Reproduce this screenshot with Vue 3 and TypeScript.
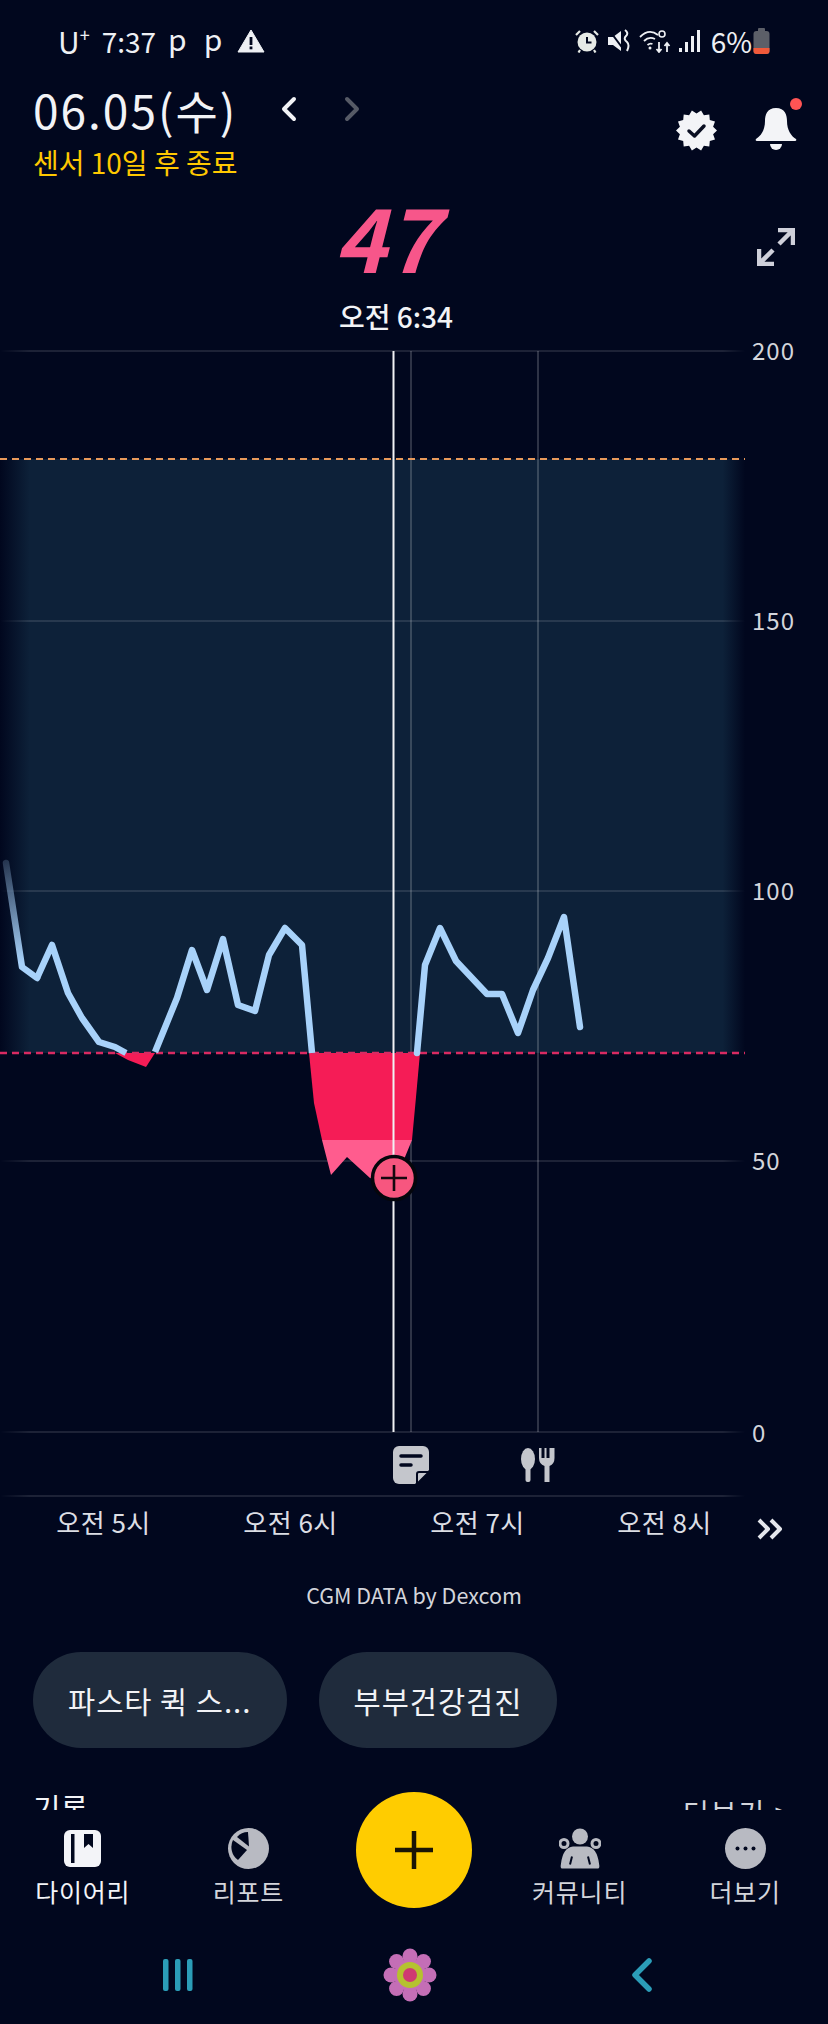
<script setup lang="ts">
// every chart coordinate below is in page pixels, the svg viewBox starts at y=331
const linePoints: [number, number][] = [
  [6, 863], [22, 967], [37, 978], [52, 945], [68, 993], [82, 1018], [99, 1042], [115, 1047],
  [126, 1053], [146, 1054], [155, 1052], [177, 998], [192, 950], [207, 990], [223, 939],
  [238, 1005], [255, 1011], [269, 955], [285, 928], [302, 945], [312, 1053],
]
const linePoints2: [number, number][] = [
  [417, 1053], [425, 965], [440, 928], [456, 961], [487, 994], [502, 994], [518, 1033],
  [533, 990], [548, 958], [564, 917], [580, 1027],
]
const toPath = (pts: [number, number][]) => pts.map((p) => p.join(',')).join(' ')

const lowBig = '309,1053 314,1103 322,1140 412,1140 416,1097 420,1053'
const lowTip = '322,1140 331,1175 347,1157 370,1178 394,1185 405,1157 412,1140'
const lowSmall = '115,1053 128,1060 146,1067 155,1053'

const gridLines = [351, 621, 891, 1161, 1432, 1496]
const yLabels = [
  { y: 351, t: '200' },
  { y: 621, t: '150' },
  { y: 891, t: '100' },
  { y: 1161, t: '50' },
  { y: 1433, t: '0' },
]
const hours = ['오전 5시', '오전 6시', '오전 7시', '오전 8시']
const chips = ['파스타 퀵 스...', '부부건강검진']
const petals = [0, 45, 90, 135, 180, 225, 270, 315]
const badgePts = Array.from({ length: 28 }, (_, i) => {
  const r = i % 2 ? 17 : 20.5
  const a = (i / 28) * Math.PI * 2
  return `${(20.5 + r * Math.cos(a)).toFixed(1)},${(20.5 + r * Math.sin(a)).toFixed(1)}`
}).join(' ')
</script>

<template>
  <div class="page">
    <div class="main">
      <div class="status">
        <div class="status-left">
          <span class="carrier">U<sup>+</sup></span>
          <span>7:37</span>
          <span class="p first">p</span>
          <span class="p">p</span>
          <svg class="warn" width="28" height="24" viewBox="0 0 28 24">
            <path d="M14 1 L27 23 H1 Z" fill="#eef0f4" stroke="#eef0f4" stroke-linejoin="round" />
            <rect x="12.6" y="8" width="2.8" height="8" fill="#01071e" />
            <rect x="12.6" y="17.5" width="2.8" height="2.8" fill="#01071e" />
          </svg>
        </div>
        <div class="status-right">
          <svg width="24" height="24" viewBox="0 0 24 24">
            <circle cx="12" cy="13" r="9.5" fill="#e6eae6" />
            <path d="M12 8 V13.5 H16.5" fill="none" stroke="#01071e" stroke-width="2" />
            <path d="M1 6 L5 2 M23 6 L19 2 M5 21 L3.5 23.5 M19 21 L20.5 23.5" stroke="#e6eae6" stroke-width="2.2" />
          </svg>
          <svg class="mute" width="24" height="24" viewBox="0 0 24 24">
            <path d="M1 8 H6 L14 2 V22 L6 16 H1 Z" fill="#eef0f4" />
            <path d="M2 1 L17 21" stroke="#01071e" stroke-width="2" />
            <path d="M18 1 q4 3 1 6 q-3 3 1 6 q3 3 0 9" fill="none" stroke="#eef0f4" stroke-width="2" />
          </svg>
          <svg class="wifi" width="32" height="24" viewBox="0 0 32 24">
            <path d="M1 8 Q10 -1 19 6 M5 12 Q10 7 16 10 M8.500 16 Q11 14 13.500 15" fill="none" stroke="#eef0f4" stroke-width="1.8" />
            <circle cx="11" cy="19" r="1.500" fill="#eef0f4" />
            <circle cx="23" cy="5" r="3" fill="none" stroke="#eef0f4" stroke-width="1.600" />
            <path d="M20 13 V23 M17.500 20 L20 23 L22.500 20 M28 23 V14 M25.500 17 L28 14 L30.500 17" fill="none" stroke="#eef0f4" stroke-width="1.800" />
          </svg>
          <svg class="signal" width="22" height="24" viewBox="0 0 22 24">
            <rect x="0" y="19" width="3" height="4" fill="#eef0f4" />
            <rect x="6" y="13" width="3" height="10" fill="#eef0f4" />
            <rect x="12" y="7" width="3" height="16" fill="#eef0f4" />
            <rect x="18" y="1" width="3" height="22" fill="#eef0f4" />
          </svg>
          <span class="pct">6%</span>
          <svg width="17" height="26" viewBox="0 0 17 26">
            <rect x="5" y="0" width="7" height="4" rx="1" fill="#5c5f68" />
            <rect x="0.500" y="3" width="16" height="23" rx="3" fill="#5c5f68" />
            <path d="M0.500 20 H16.500 V23 a3 3 0 0 1 -3 3 H3.500 a3 3 0 0 1 -3 -3 Z" fill="#f0593a" />
          </svg>
        </div>
      </div>

      <div class="head">
        <div class="head-left">
          <div class="date-row">
            <span class="date">06.05(수)</span>
            <svg class="chev" width="20" height="28" viewBox="0 0 20 28">
              <path d="M15 4 L5 14 L15 24" fill="none" stroke="#f2f3f6" stroke-width="4" stroke-linecap="round" stroke-linejoin="round" />
            </svg>
            <svg class="chev next" width="20" height="28" viewBox="0 0 20 28">
              <path d="M5 4 L15 14 L5 24" fill="none" stroke="#565a66" stroke-width="4" stroke-linecap="round" stroke-linejoin="round" />
            </svg>
          </div>
          <div class="sensor">센서 10일 후 종료</div>
        </div>
        <div class="head-right">
          <svg width="41" height="41" viewBox="0 0 41 41">
            <polygon :points="badgePts" fill="#f3f4f7" />
            <path d="M13 21 L18.500 26 L28 16" fill="none" stroke="#0a0f22" stroke-width="3.500" stroke-linecap="round" stroke-linejoin="round" />
          </svg>
          <div class="bell">
            <svg width="42" height="42" viewBox="0 0 42 42">
              <path d="M21 0 C12 0 10 7 10 13 C10 22 6 28 1 31 Q0 33 2 33 H40 Q42 33 41 31 C36 28 32 22 32 13 C32 7 30 0 21 0 Z" fill="#f3f4f7" />
              <path d="M15 36 H27 A6 6 0 0 1 15 36 Z" fill="#f3f4f7" />
            </svg>
            <span class="bell-dot"></span>
          </div>
        </div>
      </div>

      <div class="reading">
        <div class="value">47</div>
        <div class="value-time">오전 6:34</div>
        <svg class="expand" width="38" height="38" viewBox="0 0 38 38">
          <path d="M36 2 L22 16 M21 2 H36 V17" fill="none" stroke="#cfd0da" stroke-width="4.500" />
          <path d="M2 36 L16 22 M2 21 V36 H17" fill="none" stroke="#cfd0da" stroke-width="4.500" />
        </svg>
      </div>

      <svg class="chart" width="828" height="1166" viewBox="0 331 828 1166">
        <defs>
          <linearGradient id="bandFade" x1="0" x2="745" y1="0" y2="0" gradientUnits="userSpaceOnUse">
            <stop offset="0" stop-color="#0d2139" stop-opacity="0" />
            <stop offset="0.04" stop-color="#0d2139" />
            <stop offset="0.97" stop-color="#0d2139" />
            <stop offset="1" stop-color="#0d2139" stop-opacity="0" />
          </linearGradient>
          <linearGradient id="gridFade" x1="0" x2="745" y1="0" y2="0" gradientUnits="userSpaceOnUse">
            <stop offset="0" stop-color="#fff" stop-opacity="0" />
            <stop offset="0.04" stop-color="#fff" stop-opacity="0.11" />
            <stop offset="0.97" stop-color="#fff" stop-opacity="0.11" />
            <stop offset="1" stop-color="#fff" stop-opacity="0" />
          </linearGradient>
          <linearGradient id="lineFade" x1="0" x2="0" y1="860" y2="975" gradientUnits="userSpaceOnUse">
            <stop offset="0" stop-color="#a8d2fa" stop-opacity="0.2" />
            <stop offset="0.9" stop-color="#a8d2fa" />
          </linearGradient>
        </defs>

        <rect x="0" y="459" width="745" height="594" fill="url(#bandFade)" />
        <line v-for="y in gridLines" :key="y" x1="0" x2="745" :y1="y" :y2="y" stroke="url(#gridFade)" stroke-width="2" />
        <line x1="411" x2="411" y1="351" y2="1432" stroke="#fff" stroke-opacity="0.18" stroke-width="2" />
        <line x1="538" x2="538" y1="351" y2="1432" stroke="#fff" stroke-opacity="0.18" stroke-width="2" />

        <polygon :points="lowBig" fill="#f51c56" />
        <polygon :points="lowTip" fill="#ff5c8e" />
        <polygon :points="lowSmall" fill="#f51c56" />

        <line x1="0" x2="745" y1="459" y2="459" stroke="#e8995a" stroke-width="2" stroke-dasharray="7 5" />
        <line x1="0" x2="745" y1="1053" y2="1053" stroke="#d92a62" stroke-width="2.500" stroke-dasharray="7 5" />

        <polyline :points="toPath(linePoints.slice(0, 3))" fill="none" stroke="url(#lineFade)" stroke-width="6.500" stroke-linejoin="round" stroke-linecap="round" />
        <polyline :points="toPath(linePoints.slice(2, 9))" fill="none" stroke="#a8d2fa" stroke-width="6.500" stroke-linejoin="round" />
        <polyline :points="toPath(linePoints.slice(10))" fill="none" stroke="#a8d2fa" stroke-width="6.500" stroke-linejoin="round" />
        <polyline :points="toPath(linePoints2)" fill="none" stroke="#a8d2fa" stroke-width="6.500" stroke-linejoin="round" stroke-linecap="round" />

        <line x1="393.500" x2="393.500" y1="351" y2="1432" stroke="#f1f2f4" stroke-width="2" />
        <circle cx="394" cy="1178" r="21.500" fill="#f7567f" stroke="#05060c" stroke-width="3.500" />
        <path d="M381 1178 H407 M394 1165 V1191" stroke="#14080f" stroke-width="2.600" />

        <g fill="#c4c6cc">
          <path d="M399 1446 H423 a6 6 0 0 1 6 6 V1470 L415 1484 H399 a6 6 0 0 1 -6 -6 V1452 a6 6 0 0 1 6 -6 Z" />
          <path d="M401 1456 H421 M401 1465 H411" stroke="#01071e" stroke-width="3.500" stroke-linecap="round" />
          <path d="M417 1484 V1474 a2 2 0 0 1 2 -2 H429 Z" stroke="#01071e" stroke-width="2" />
          <ellipse cx="528" cy="1459" rx="7" ry="11" />
          <rect x="525.500" y="1464" width="5" height="18" rx="2" />
          <path d="M539 1448 H541.500 V1458 H544.500 V1448 H546.500 V1458 H549.500 V1448 H554.500 V1458 Q554.500 1464 549.500 1466 V1482 H544.500 V1466 Q539 1464 539 1458 Z" />
        </g>

        <text v-for="l in yLabels" :key="l.t" class="y-label" x="752" :y="l.y + 9">{{ l.t }}</text>
      </svg>

      <div class="hours">
        <span v-for="h in hours" :key="h" class="hour">{{ h }}</span>
        <svg class="more-hours" width="26" height="22" viewBox="0 0 26 22">
          <path d="M2 2 L11 11 L2 20 M14 2 L23 11 L14 20" fill="none" stroke="#e4e6ec" stroke-width="4" stroke-linejoin="round" />
        </svg>
      </div>

      <div class="credit">CGM DATA by Dexcom</div>

      <div class="chips">
        <span v-for="c in chips" :key="c" class="chip">{{ c }}</span>
      </div>

      <div class="section">
        <span class="section-title">기록</span>
        <span class="section-link">더보기 &gt;</span>
      </div>
    </div>

    <nav class="tabs">
      <div class="tab active">
        <svg width="37" height="37" viewBox="0 0 37 37">
          <rect width="37" height="37" rx="6" fill="#f3f4f8" />
          <rect x="7" y="4" width="3.500" height="29" fill="#01071e" />
          <path d="M20 4 H29 V18 L24.500 14 L20 18 Z" fill="#01071e" />
        </svg>
        <span>다이어리</span>
      </div>
      <div class="tab">
        <svg width="41" height="41" viewBox="0 0 41 41">
          <circle cx="20.500" cy="20.500" r="20.500" fill="#b8bac2" />
          <path d="M20 20.500 L8 11 A15 15 0 0 1 19 6 Z" fill="#01071e" transform="translate(1 -2)" />
          <path d="M19 23 L5 13 A16 16 0 0 0 10 33 Z" fill="#01071e" transform="translate(0 -1)" />
        </svg>
        <span>리포트</span>
      </div>
      <div class="tab tab-fab">
        <button class="fab" type="button" aria-label="add">
          <svg width="40" height="40" viewBox="0 0 40 40">
            <path d="M1 20 H39 M20 1 V39" stroke="#1a1505" stroke-width="4.500" />
          </svg>
        </button>
      </div>
      <div class="tab">
        <svg width="42" height="40" viewBox="0 0 42 40">
          <circle cx="21" cy="8" r="8" fill="#b8bac2" />
          <circle cx="5" cy="15" r="4" fill="none" stroke="#b8bac2" stroke-width="3" />
          <circle cx="37" cy="15" r="4" fill="none" stroke="#b8bac2" stroke-width="3" />
          <path d="M3 40 Q1 40 2 35 Q4 19 14 18 H28 Q38 19 40 35 Q41 40 39 40 Z" fill="#b8bac2" />
          <path d="M11 36 L13 28 M31 36 L29 28" stroke="#01071e" stroke-width="2" />
        </svg>
        <span>커뮤니티</span>
      </div>
      <div class="tab">
        <svg width="41" height="41" viewBox="0 0 41 41">
          <circle cx="20.500" cy="20.500" r="20.500" fill="#b8bac2" />
          <circle cx="12.500" cy="20.500" r="2" fill="#01071e" />
          <circle cx="20.500" cy="20.500" r="2" fill="#01071e" />
          <circle cx="28.500" cy="20.500" r="2" fill="#01071e" />
        </svg>
        <span>더보기</span>
      </div>
    </nav>

    <div class="sysnav">
      <svg width="32" height="32" viewBox="0 0 32 32">
        <rect x="1" y="0" width="5.500" height="32" rx="2" fill="#2b9db8" />
        <rect x="13" y="0" width="5.500" height="32" rx="2" fill="#2b9db8" />
        <rect x="25" y="0" width="5.500" height="32" rx="2" fill="#2b9db8" />
      </svg>
      <svg width="54" height="54" viewBox="0 0 54 54">
        <circle v-for="a in petals" :key="a" cx="27" cy="8" r="7.500" fill="#c46eb6" :transform="`rotate(${a} 27 27)`" />
        <circle cx="27" cy="27" r="16" fill="#c46eb6" />
        <circle cx="27" cy="27" r="13" fill="#b5c22f" />
        <circle cx="27" cy="27" r="7" fill="#cf3a72" />
      </svg>
      <svg width="22" height="34" viewBox="0 0 22 34">
        <path d="M18 3 L4 17 L18 31" fill="none" stroke="#2b9db8" stroke-width="5.500" stroke-linecap="round" stroke-linejoin="round" />
      </svg>
    </div>
  </div>
</template>

<style scoped>
.page {
  position: relative;
  width: 828px;
  height: 2024px;
  display: flex;
  flex-direction: column;
  overflow: hidden;
  background: #01071e;
  color: #f2f3f6;
  font-family: "Noto Sans CJK KR", "Noto Sans", sans-serif;
}

.main {
  height: 1810px;
  flex: none;
  overflow: hidden;
}

.status {
  height: 70px;
  padding: 12px 58px 0 58px;
  box-sizing: border-box;
  display: flex;
  align-items: center;
  justify-content: space-between;
  font-size: 28px;
  color: #eef0f4;
}

.status-left {
  display: flex;
  align-items: center;
  gap: 12px;
}

.carrier {
  font-size: 30px;
  line-height: 1;
}

.carrier sup {
  font-size: 18px;
  vertical-align: 12px;
  line-height: 0;
}

.status-left .p {
  margin-left: 5px;
  font-size: 30px;
  margin-top: -6px;
}

.status-left .p.first {
  margin-left: 0;
}

.warn {
  margin-left: 3px;
}

.status-right {
  display: flex;
  align-items: center;
  gap: 8px;
}

.status-right .pct {
  margin-left: 2px;
  font-size: 28px;
  margin-right: -7px;
}

.head {
  height: 110px;
  padding: 10px 31px 0 33px;
  box-sizing: border-box;
  display: flex;
  justify-content: space-between;
}

.date-row {
  display: flex;
  align-items: center;
  height: 58px;
}

.date {
  width: 246px;
  font-size: 46px;
  line-height: 58px;
  letter-spacing: 2px;
}

.chev.next {
  margin-left: 43px;
}

.sensor {
  font-size: 28px;
  line-height: 36px;
  color: #ffc800;
  margin-top: 6px;
}

.head-right {
  display: flex;
  align-items: flex-start;
  gap: 38px;
  padding-top: 30px;
}

.bell {
  position: relative;
  margin-top: -2px;
}

.bell-dot {
  position: absolute;
  top: -10px;
  right: -5px;
  width: 12px;
  height: 12px;
  border-radius: 50%;
  background: #ff5454;
}

.reading {
  position: relative;
  height: 151px;
  text-align: center;
  padding-right: 36px;
  padding-top: 5px;
  box-sizing: border-box;
}

.value {
  font-size: 88px;
  font-weight: 700;
  line-height: 100px;
  padding-right: 20px;
  color: #f7568a;
  font-style: italic;
}

.value-time {
  font-size: 28px;
  line-height: 34px;
  font-weight: 500;
  margin-top: 14px;
}

.expand {
  position: absolute;
  top: 48px;
  right: 33px;
}

.chart {
  display: block;
}

.y-label {
  font-size: 24px;
  fill: #d3d5db;
  letter-spacing: 1px;
}

.hours {
  height: 48px;
  padding-left: 10px;
  display: flex;
  align-items: center;
  font-size: 26px;
  letter-spacing: 0.5px;
  color: #dcdee4;
}

.hour {
  width: 187px;
  text-align: center;
}

.more-hours {
  margin-left: -1px;
  margin-top: 16px;
}

.credit {
  height: 76px;
  line-height: 76px;
  margin-top: 12px;
  text-align: center;
  font-size: 21.500px;
  color: #d3d5db;
}

.chips {
  display: flex;
  gap: 32px;
  padding: 0 33px;
  margin-top: 19px;
}

.chip {
  height: 96px;
  box-sizing: border-box;
  padding: 0 35px;
  border-radius: 48px;
  background: #1f2b3c;
  display: flex;
  align-items: center;
  font-size: 29.500px;
  letter-spacing: 1px;
  color: #f2f3f6;
}

.section {
  display: flex;
  justify-content: space-between;
  padding: 0 36px 0 33px;
  margin-top: 37px;
  font-size: 30px;
}

.section-link {
  color: #d3d5db;
  font-size: 28px;
  letter-spacing: 2px;
  margin-top: 7px;
}

.tabs {
  height: 124px;
  display: grid;
  grid-template-columns: repeat(5, 1fr);
  flex: none;
}

.tab {
  display: flex;
  flex-direction: column;
  align-items: center;
  justify-content: flex-start;
  height: 100px;
  color: #d3d5db;
  font-size: 25px;
  letter-spacing: 0.8px;
}

.tab svg {
  height: 41px;
  margin-top: 18px;
}

.tab span {
  line-height: 30px;
  margin-top: 7px;
}

.tab.active {
  color: #f3f4f8;
}

.tab-fab {
  position: relative;
}

.fab {
  position: absolute;
  top: -18px;
  left: 50%;
  margin-left: -58px;
  width: 116px;
  height: 116px;
  border: none;
  padding: 0;
  border-radius: 50%;
  background: #ffcc00;
  display: flex;
  align-items: center;
  justify-content: center;
}

.fab svg {
  margin-top: 0;
  height: 40px;
}

.sysnav {
  flex: 1;
  display: grid;
  grid-template-columns: repeat(3, 232px);
  justify-items: center;
  align-items: center;
  padding-left: 62px;
  padding-bottom: 8px;
  box-sizing: border-box;
}
</style>

<style>
body {
  background: #01071e;
}
</style>
